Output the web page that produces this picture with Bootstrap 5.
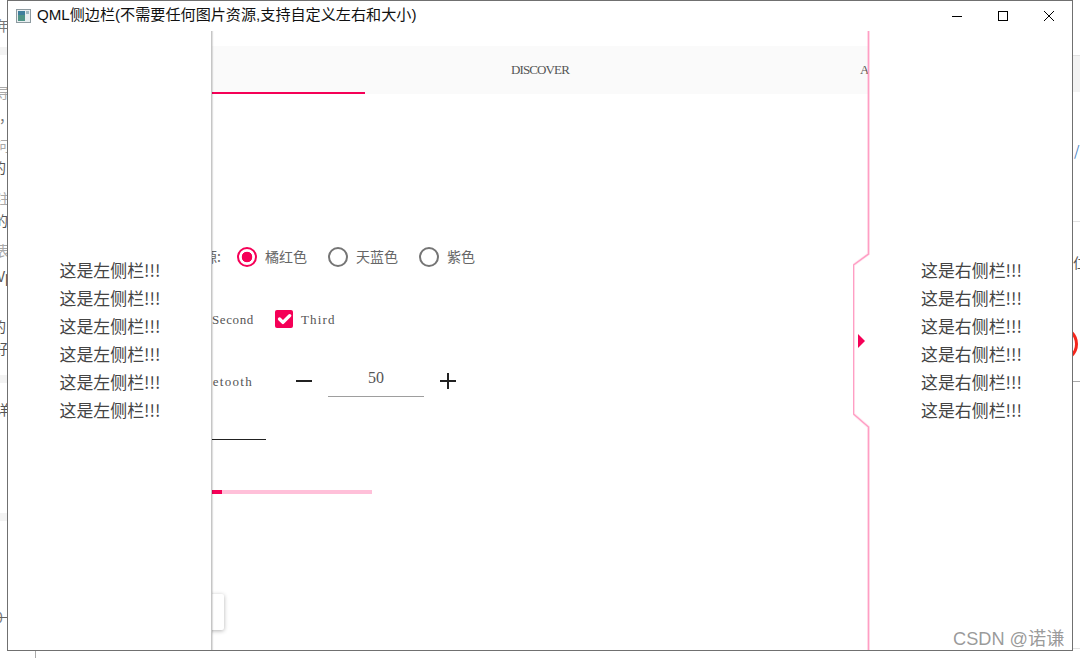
<!DOCTYPE html>
<html lang="zh">
<head>
<meta charset="utf-8">
<title>QML侧边栏</title>
<link href="https://cdn.jsdelivr.net/npm/bootstrap@5.3.0/dist/css/bootstrap.min.css" rel="stylesheet">
<style>
html,body{width:1080px;height:658px;overflow:hidden;background:#fff;margin:0}
.desk-item{position:absolute;font:14px/16px "Noto Sans CJK SC",sans-serif;color:#777;white-space:nowrap}
.desk-dark{color:#555}
.desk-faint{color:#aaa}
.desk-band{position:absolute;background:#f3f3f3}
.desk-line{position:absolute;height:1px;background:#e2e2e2}
.desk-arc{position:absolute;left:1042px;top:326px;width:36px;height:36px;border:3px solid #f5261c;border-radius:50%}
.app-window{position:absolute;left:7px;top:0;width:1066px;height:651px;border:1px solid #707070;background:#fff;overflow:hidden}
.title-bar{height:30px;padding-left:8px;font:15.12px/1 "Liberation Sans","Noto Sans CJK SC",sans-serif;color:#111}
.title-text{margin-left:6px;position:relative;top:-1.5px}
.win-btn{width:46px;height:30px}
.app-body{position:relative;height:619px;overflow:hidden}
.serif-text{font:13px/1 "Liberation Serif","Noto Sans CJK SC",serif;color:#555;white-space:nowrap}
.sp-second{letter-spacing:.6px}
.sp-third{letter-spacing:1.2px}
.sp-blue{letter-spacing:1.3px}
.tab-strip{margin-top:15px;height:48px;background:#fafafa;padding-left:7px}
.tab-cell{flex:0 0 350px;height:48px;font:13px/48px "Liberation Serif",serif;letter-spacing:-.9px;color:#555;text-align:center;white-space:nowrap}
.tab-on{border-bottom:2px solid #f50057}
.tab-last{padding-right:6px}
.ctl-row{height:40px;margin-top:22px}
.ctl-first{margin-top:143px}
.gutter{flex:0 0 204px;text-align:right}
.gutter-wide{flex-basis:213px}
.gutter-blue{flex-basis:245px}
.cjk-label{font:14px/1 "Noto Sans CJK SC",sans-serif;color:#666;white-space:nowrap;position:relative;top:-1px}
.radio-box{width:20px;height:20px;margin:0 8px 0 0!important;border:2px solid #757575;background-color:#fff;flex:none}
.radio-first{margin-left:16px!important}
.radio-box:checked{border-color:#f50057;background-color:#fff;background-image:radial-gradient(circle,#f50057 5px,#fff 5.6px)}
.tick-box{width:18px;height:18px;margin:0 8px 0 21px!important;border:0;border-radius:2px!important;flex:none;background-size:125%}
.tick-box:checked{background-color:#f50057}
.gap-after{margin-right:21px}
.minus-icon{margin-left:43px}
.num-input{width:96px;height:36px;margin:0 16px;padding:0 0 2px;border:0;border-bottom:1px solid #9e9e9e;border-radius:0;text-align:center;font:16px/1 "Liberation Serif",serif;color:#555;background:transparent}
.text-rule{height:1px;width:120px;margin:38px 0 0 138px;background:#212121}
.range-bar{height:4px;width:200px;margin:50px 0 0 164px;border-radius:0;background:#ffc0d9}
.range-bar .progress-bar{background:#f50057}
.plain-card{width:100px;height:36px;margin:100px 0 0 116px;border-radius:2px;background:#fff;box-shadow:0 1px 4px rgba(0,0,0,.3)}
.drawer-left{position:absolute;left:0;top:0;bottom:0;width:204px;background:#fff;border-right:1px solid #c6c6c6;box-shadow:1px 0 1px rgba(0,0,0,.12)}
.drawer-right{position:absolute;left:845px;top:0;bottom:0;width:219px;padding-left:15px}
.drawer-shape{position:absolute;left:0;top:0}
.drawer-text{position:relative;margin:-2px 0 0 1px;font:16.9px/28px "Noto Sans CJK SC",sans-serif;color:#444;text-align:center;white-space:nowrap}
.drawer-right .drawer-text{margin-left:3px}
.watermark{position:absolute;left:953px;top:628px;font:18.2px/22px "Liberation Sans","Noto Sans CJK SC",sans-serif;color:rgba(110,110,110,.7);white-space:nowrap}
</style>
</head>
<body>
<!-- desktop behind the window -->
<div class="desk-band" style="left:0;top:47px;width:7px;height:8px"></div>
<div class="desk-band" style="left:0;top:375px;width:7px;height:8px"></div>
<div class="desk-band" style="left:0;top:513px;width:7px;height:8px"></div>
<div class="desk-item" style="left:-4px;top:17px">年</div>
<div class="desk-item desk-faint" style="left:-4px;top:84px">导</div>
<div class="desk-item" style="left:-1px;top:108px">，</div>
<div class="desk-item desk-faint" style="left:-4px;top:137px">问</div>
<div class="desk-item desk-dark" style="left:-8px;top:159px">的</div>
<div class="desk-item desk-faint" style="left:-4px;top:190px">注</div>
<div class="desk-item desk-dark" style="left:-6px;top:212px">的</div>
<div class="desk-item desk-faint" style="left:-4px;top:242px">表</div>
<div class="desk-item desk-dark" style="left:-3px;top:268px">Vp</div>
<div class="desk-item desk-dark" style="left:-8px;top:318px">的</div>
<div class="desk-item desk-dark" style="left:-6px;top:340px">好</div>
<div class="desk-item desk-dark" style="left:-5px;top:401px">详</div>
<div class="desk-item" style="left:-5px;top:609px">0</div>
<div class="desk-line" style="left:0;top:617px;width:7px;background:#666"></div>
<div class="desk-line" style="left:35px;top:651px;width:1px;height:7px;background:#aaa"></div>
<div class="desk-band" style="left:1073px;top:55px;width:7px;height:37px"></div>
<div class="desk-line" style="left:1073px;top:55px;width:7px"></div>
<div class="desk-line" style="left:1073px;top:221px;width:7px"></div>
<div class="desk-line" style="left:1073px;top:381px;width:7px;background:#aaa"></div>
<div class="desk-line" style="left:1073px;top:648px;width:7px"></div>
<div class="desk-item" style="left:1074px;top:142px;color:#4a7fc0">/</div>
<div class="desk-item desk-dark" style="left:1073px;top:254px">仁</div>
<div class="desk-arc"></div>

<div class="app-window d-flex flex-column">
  <div class="title-bar d-flex align-items-center">
    <svg width="15" height="14" viewBox="0 0 15 14"><rect x=".5" y=".5" width="14" height="13" fill="#e8eef0" stroke="#8d9aa0"/><rect x="2" y="2" width="7" height="10" fill="#4f9486"/><rect x="2" y="2" width="7" height="4" fill="#3f7f9c"/><rect x="10" y="2" width="3" height="3" fill="#9fb8c0"/></svg>
    <span class="title-text">QML侧边栏(不需要任何图片资源,支持自定义左右和大小)</span>
    <div class="ms-auto d-flex">
      <div class="win-btn d-flex align-items-center justify-content-center"><svg width="10" height="10" viewBox="0 0 10 10"><path d="M0 5.5H10" stroke="#000"/></svg></div>
      <div class="win-btn d-flex align-items-center justify-content-center"><svg width="10" height="10" viewBox="0 0 10 10"><rect x=".5" y=".5" width="9" height="9" fill="none" stroke="#000"/></svg></div>
      <div class="win-btn d-flex align-items-center justify-content-center"><svg width="10" height="10" viewBox="0 0 10 10"><path d="M0 0L10 10M10 0L0 10" stroke="#000"/></svg></div>
    </div>
  </div>
  <div class="app-body">
    <div class="tab-strip d-flex">
      <div class="tab-cell tab-on">HOME</div>
      <div class="tab-cell">DISCOVER</div>
      <div class="tab-cell tab-last">ACTIVITY</div>
    </div>
    <div class="ctl-row ctl-first d-flex align-items-center">
      <div class="gutter gutter-wide cjk-label">主题资源:</div>
      <input class="form-check-input radio-box radio-first" type="radio" name="c" checked>
      <span class="cjk-label gap-after">橘红色</span>
      <input class="form-check-input radio-box" type="radio" name="c">
      <span class="cjk-label gap-after">天蓝色</span>
      <input class="form-check-input radio-box" type="radio" name="c">
      <span class="cjk-label">紫色</span>
    </div>
    <div class="ctl-row d-flex align-items-center">
      <div class="gutter"></div>
      <span class="serif-text sp-second">Second</span>
      <input class="form-check-input tick-box" type="checkbox" checked>
      <span class="serif-text sp-third">Third</span>
    </div>
    <div class="ctl-row d-flex align-items-center">
      <div class="gutter gutter-blue serif-text sp-blue">Bluetooth</div>
      <svg class="minus-icon" width="16" height="16" viewBox="0 0 16 16"><path d="M0 8H16" stroke="#212121" stroke-width="2"/></svg>
      <input class="form-control num-input align-self-start" type="text" value="50">
      <svg width="16" height="16" viewBox="0 0 16 16"><path d="M0 8H16M8 0V16" stroke="#212121" stroke-width="2"/></svg>
    </div>
    <div class="text-rule"></div>
    <div class="progress range-bar"><div class="progress-bar" style="width:25%"></div></div>
    <div class="plain-card"></div>

    <div class="drawer-left d-flex align-items-center justify-content-center">
      <div class="drawer-text">这是左侧栏!!!<br>这是左侧栏!!!<br>这是左侧栏!!!<br>这是左侧栏!!!<br>这是左侧栏!!!<br>这是左侧栏!!!</div>
    </div>
    <div class="drawer-right d-flex align-items-center justify-content-center">
      <svg class="drawer-shape" width="219" height="619" viewBox="0 0 219 619">
        <path d="M15.5 0V223L.5 234V383L15.5 396V619H219V0Z" fill="#fff"/>
        <path d="M15.5 0V223L.5 234V383L15.5 396V619" fill="none" stroke="#ff9ec4" stroke-width="3" stroke-opacity=".2"/>
        <path d="M15.5 0V223L.5 234V383L15.5 396V619" fill="none" stroke="#ff9ec4" stroke-width="1.5"/>
        <path d="M5 303L12 310L5 317Z" fill="#f50057"/>
      </svg>
      <div class="drawer-text">这是右侧栏!!!<br>这是右侧栏!!!<br>这是右侧栏!!!<br>这是右侧栏!!!<br>这是右侧栏!!!<br>这是右侧栏!!!</div>
    </div>
  </div>
</div>
<div class="watermark">CSDN @诺谦</div>
</body>
</html>
